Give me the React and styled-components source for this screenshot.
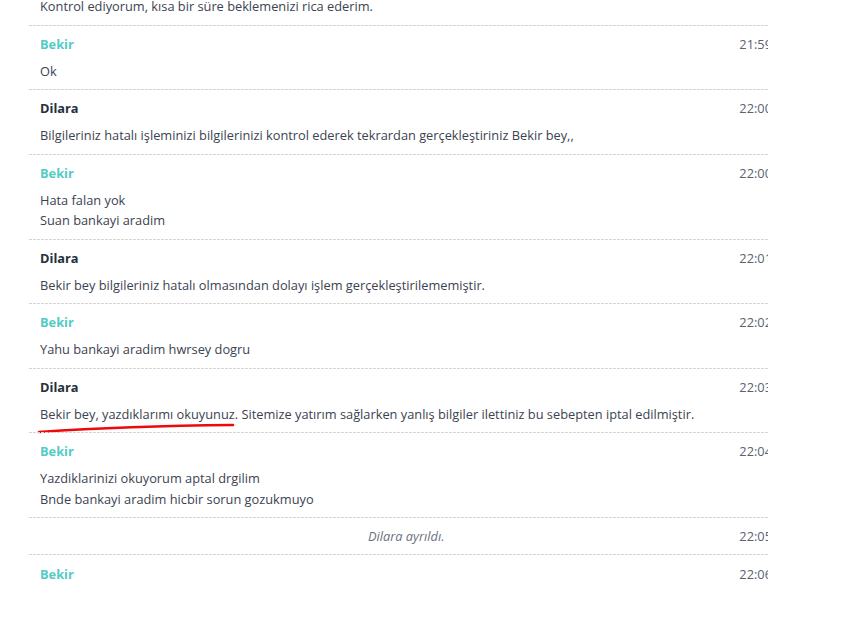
import React from "react";
import styled, { createGlobalStyle } from "styled-components";

const GlobalStyle = createGlobalStyle`
  html, body {
    margin: 0;
    padding: 0;
    background: #ffffff;
  }
  body {
    font-family: "Open Sans", "Liberation Sans", sans-serif;
    font-size: 12.8px;
    color: #3b4351;
  }
`;

const messages = [
  { from: "Dilara", time: "21:58", lines: ["Kontrol ediyorum, kısa bir süre beklemenizi rica ederim."] },
  { from: "Bekir", time: "21:59", lines: ["Ok"] },
  {
    from: "Dilara",
    time: "22:00",
    lines: ["Bilgileriniz hatalı işleminizi bilgilerinizi kontrol ederek tekrardan gerçekleştiriniz Bekir bey,,"],
  },
  { from: "Bekir", time: "22:00", lines: ["Hata falan yok", "Suan bankayi aradim"] },
  {
    from: "Dilara",
    time: "22:01",
    lines: ["Bekir bey bilgileriniz hatalı olmasından dolayı işlem gerçekleştirilememiştir."],
  },
  { from: "Bekir", time: "22:02", lines: ["Yahu bankayi aradim hwrsey dogru"] },
  {
    from: "Dilara",
    time: "22:03",
    marked: true,
    lines: [
      "Bekir bey, yazdıklarımı okuyunuz. Sitemize yatırım sağlarken yanlış bilgiler ilettiniz bu sebepten iptal edilmiştir.",
    ],
  },
  {
    from: "Bekir",
    time: "22:04",
    lines: ["Yazdiklarinizi okuyorum aptal drgilim", "Bnde bankayi aradim hicbir sorun gozukmuyo"],
  },
  { system: true, time: "22:05", text: "Dilara ayrıldı." },
  { from: "Bekir", time: "22:06", lines: [] },
];

const App = () => (
  <>
    <GlobalStyle />
    <Panel>
      <Log>
        {messages.map((m, i) =>
          m.system ? (
            <SystemRow key={i}>
              <SystemText>{m.text}</SystemText>
              <Time>{m.time}</Time>
            </SystemRow>
          ) : (
            <Row key={i}>
              <Head>
                <Name $guest={m.from === "Bekir"}>{m.from}</Name>
                <Time>{m.time}</Time>
              </Head>
              {m.lines.length > 0 && (
                <Body>
                  {m.lines.map((l, j) => (
                    <Line key={j}>{l}</Line>
                  ))}
                  {m.marked && (
                    <Mark viewBox="0 0 200 14" width="200" height="14">
                      <path
                        d="M2 11 Q 90 5 196 4"
                        fill="none"
                        stroke="#ec0a0a"
                        strokeWidth="2.6"
                        strokeLinecap="round"
                      />
                    </Mark>
                  )}
                </Body>
              )}
            </Row>
          )
        )}
      </Log>
    </Panel>
  </>
);

const Panel = styled.div`
  margin-left: 29px;
  width: 739px;
  height: 619px;
  overflow: hidden;
`;

const Log = styled.div`
  width: 754px;
  margin-top: -40px;
  display: flex;
  flex-direction: column;
`;

const Separated = styled.div`
  position: relative;
  background-image: repeating-linear-gradient(
    to right,
    #d4d4d4 0 3px,
    transparent 3px 4px
  );
  background-size: 100% 1px;
  background-repeat: no-repeat;
  background-position: top left;
  padding-top: 1px;
`;

const Row = styled(Separated)`
  display: flex;
  flex-direction: column;
  gap: 6.5px;
  padding: 9px 11px 8px;
  line-height: 20.5px;
`;

const Head = styled.div`
  display: flex;
  justify-content: space-between;
  align-items: center;
`;

const Name = styled.span`
  font-weight: 700;
  color: ${(p) => (p.$guest ? "#52cbc6" : "#27303d")};
`;

const Time = styled.span`
  color: #5a6272;
`;

const Body = styled.div`
  position: relative;
  display: flex;
  flex-direction: column;
`;

const Line = styled.div`
  color: #3b4351;
`;

const Mark = styled.svg`
  position: absolute;
  left: -3px;
  top: 17px;
  overflow: visible;
`;

const SystemRow = styled(Separated)`
  display: grid;
  grid-template-columns: 1fr auto;
  align-items: center;
  padding: 8.5px 11px 7.5px;
  line-height: 20.5px;

  & + div {
    padding-top: 10.5px;
  }
`;

const SystemText = styled.span`
  font-style: italic;
  color: #6a7180;
  text-align: center;
  padding-left: 33px;
`;

export default App;
